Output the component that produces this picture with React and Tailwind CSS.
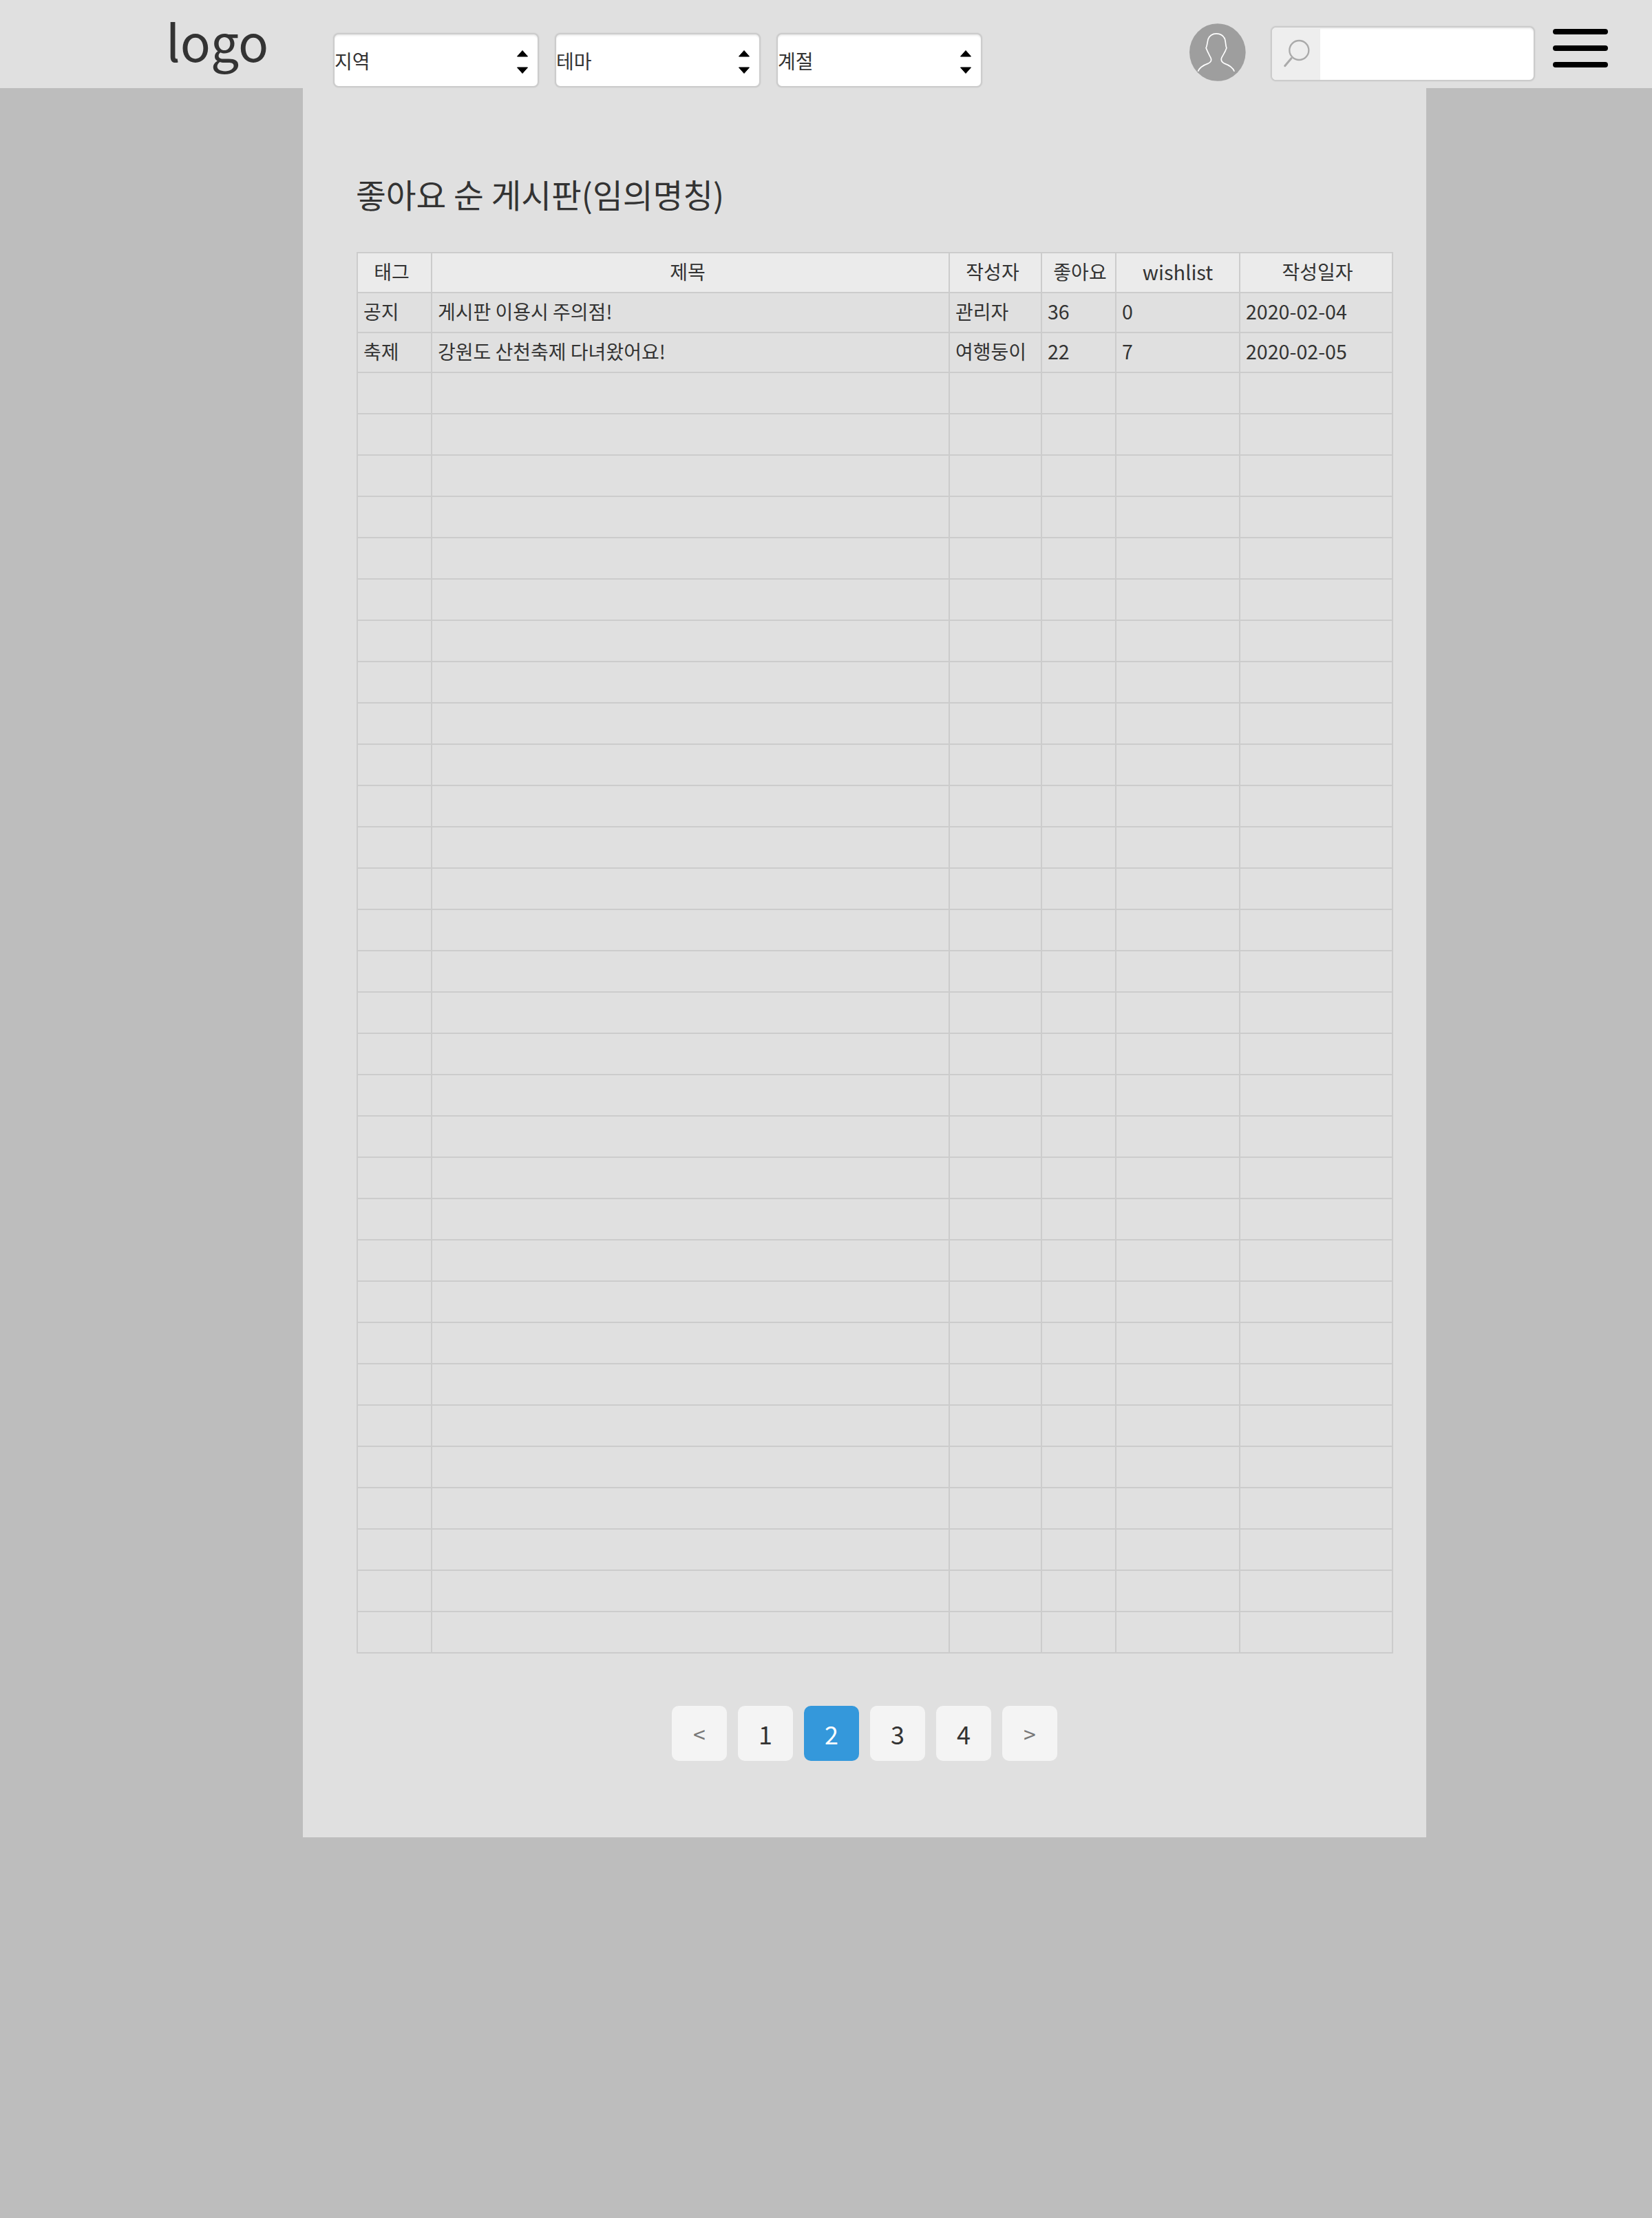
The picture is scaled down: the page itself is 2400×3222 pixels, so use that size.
const COLUMNS = [
  { label: '태그', width: 'w-[108px]', head: 'pr-2 text-[28px]' },
  { label: '제목', width: 'w-[752px]', head: 'pr-2 text-[28px]' },
  { label: '작성자', width: 'w-[134px]', head: 'pr-2 text-[28px]' },
  { label: '좋아요', width: 'w-[108px]', head: 'pl-1 text-[28px]' },
  { label: 'wishlist', width: 'w-[180px]', head: 'text-[29px]' },
  { label: '작성일자', width: 'w-[222px]', head: 'pl-1 text-[28px]' },
];

const POSTS = [
  ['공지', '게시판 이용시 주의점!', '관리자', '36', '0', '2020-02-04'],
  ['축제', '강원도 산천축제 다녀왔어요!', '여행둥이', '22', '7', '2020-02-05'],
];

const EMPTY_ROWS = Array.from({ length: 31 }, (_, i) => i);

function SelectBox({ label }) {
  return (
    <div className="flex h-[79px] w-[299px] items-center justify-between rounded-lg border-2 border-[#cccccc] bg-white pr-[14px] shadow-[inset_0_2px_2px_rgba(0,0,0,0.075),0_0_2px_rgba(0,0,0,0.1)]">
      <span className="text-[28px] leading-none">{label}</span>
      <svg width="16" height="34" viewBox="0 0 16 34" className="mt-[5px]">
        <path d="M8 0.5 L15.5 9 H0.5 Z" fill="#000" stroke="#000" strokeLinejoin="round" />
        <path d="M8 33.5 L15.5 25 H0.5 Z" fill="#000" stroke="#000" strokeLinejoin="round" />
      </svg>
    </div>
  );
}

function Avatar() {
  return (
    <svg width="82" height="84" viewBox="55 42 245 250" className="mt-[34px] shrink-0">
      <ellipse cx="177" cy="167" rx="122" ry="125" fill="#9e9e9e" />
      <path
        d="M92 250 C100 230 118 222 135 216 C148 210 153 202 147 190 C140 176 134 166 127 148 C132 140 132 125 136 110 C142 95 155 86 172 86 C190 86 203 95 209 110 C213 125 212 140 216 148 C210 166 202 176 195 190 C190 202 195 210 208 216 C225 222 242 230 250 250"
        fill="none"
        stroke="#fff"
        strokeWidth="5"
      />
    </svg>
  );
}

function SearchBox() {
  return (
    <div className="mt-[38px] flex h-[80px] w-[384px] overflow-hidden rounded-lg border-2 border-[#cccccc] bg-white shadow-[inset_0_2px_2px_rgba(0,0,0,0.075),0_0_2px_rgba(0,0,0,0.1)]">
      <div className="h-full w-[70px] bg-[#eeeeee]">
        <svg width="70" height="76" viewBox="414 63 210 228">
          <circle cx="532" cy="162" r="42" fill="none" stroke="#aaaaaa" strokeWidth="7" />
          <path d="M498 197 L470 230" stroke="#aaaaaa" strokeWidth="9" strokeLinecap="round" />
        </svg>
      </div>
    </div>
  );
}

function Hamburger() {
  return (
    <div className="mt-[42px] flex w-[80px] flex-col gap-4">
      <span className="h-2 rounded-full bg-black" />
      <span className="h-2 rounded-full bg-black" />
      <span className="h-2 rounded-full bg-black" />
    </div>
  );
}

function Pagination() {
  const pageClass = 'flex h-20 w-20 items-center justify-center rounded-[10px] bg-[#f4f4f4]';
  return (
    <div className="ml-[458px] mt-[76px] flex gap-4">
      <div className={`${pageClass} text-[32px] text-[#777777]`}>&lt;</div>
      <div className={`${pageClass} text-[36px]`}>1</div>
      <div className="flex h-20 w-20 items-center justify-center rounded-[10px] bg-[#3498db] text-[36px] text-white">2</div>
      <div className={`${pageClass} text-[36px]`}>3</div>
      <div className={`${pageClass} text-[36px]`}>4</div>
      <div className={`${pageClass} text-[32px] text-[#777777]`}>&gt;</div>
    </div>
  );
}

export default function App() {
  return (
    <div className="min-h-[3222px] bg-[#bdbdbd] font-['Noto_Sans_CJK_KR','Noto_Sans',sans-serif] text-[#333333]">
      <header className="flex h-32 items-start bg-[#e0e0e0] pr-16">
        <div className="ml-[241px] w-[243px] text-[73px] font-normal leading-[116px]">logo</div>
        <div className="mt-12 flex gap-[23px]">
          <SelectBox label="지역" />
          <SelectBox label="테마" />
          <SelectBox label="계절" />
        </div>
        <div className="ml-auto flex items-start">
          <Avatar />
          <div className="ml-[36px]">
            <SearchBox />
          </div>
          <div className="ml-[26px]">
            <Hamburger />
          </div>
        </div>
      </header>

      <main className="ml-[440px] h-[2541px] w-[1632px] bg-[#e0e0e0] pl-[78px] pr-[50px] pt-[121px]">
        <h1 className="-ml-px text-[47.6px] font-normal leading-[66px]">좋아요 순 게시판(임의명칭)</h1>
        <table className="mt-[51px] w-[1504px] table-fixed border-collapse text-[28px] leading-[36px]">
          <colgroup>
            {COLUMNS.map((col) => (
              <col key={col.label} className={col.width} />
            ))}
          </colgroup>
          <thead>
            <tr className="h-[58px] bg-[#ebebeb]">
              {COLUMNS.map((col) => (
                <th key={col.label} className={`border-2 border-[#cccccc] pb-1 text-center font-normal ${col.head}`}>
                  {col.label}
                </th>
              ))}
            </tr>
          </thead>
          <tbody>
            {POSTS.map((row) => (
              <tr key={row[1]} className="h-[58px]">
                {row.map((cell, i) => (
                  <td key={i} className={`whitespace-nowrap border-2 border-[#cccccc] px-2 pb-1 ${i >= 3 ? 'text-[28.6px]' : ''}`}>
                    {cell}
                  </td>
                ))}
              </tr>
            ))}
            {EMPTY_ROWS.map((n) => (
              <tr key={n} className="h-[60px]">
                {COLUMNS.map((col) => (
                  <td key={col.label} className="border-2 border-[#cccccc] p-0" />
                ))}
              </tr>
            ))}
          </tbody>
        </table>
        <Pagination />
      </main>
    </div>
  );
}
